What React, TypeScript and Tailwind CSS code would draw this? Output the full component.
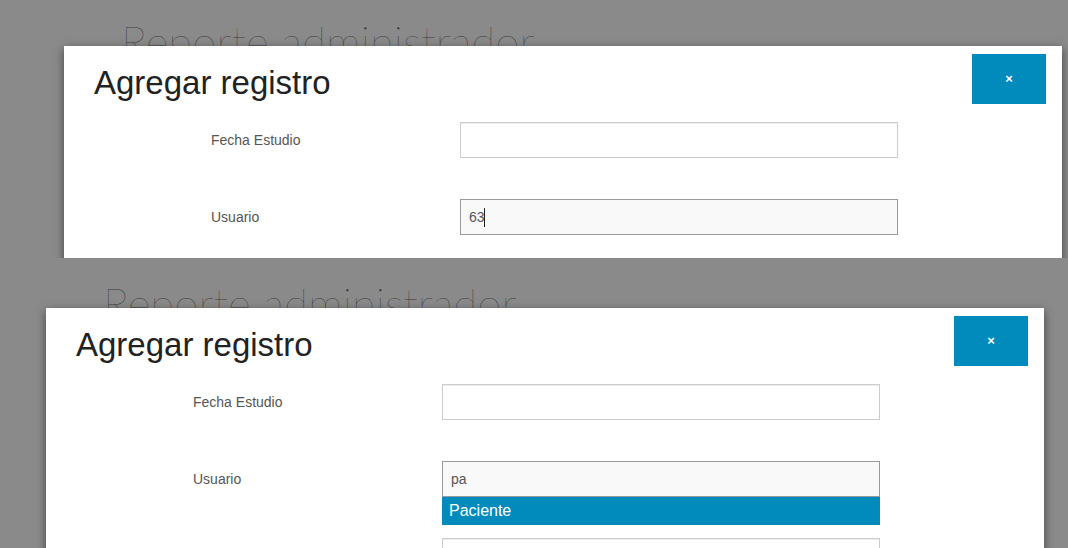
import { ReactNode } from 'react'

function Field({ label, value, focused, children }: { label: string; value?: string; focused?: boolean; children?: ReactNode }) {
  return (
    <div className="flex items-center">
      <label className="w-[396px] pl-[147px] pt-px text-[14px] text-[#555]">{label}</label>
      <div className="relative">
        <div
          className={
            focused
              ? 'w-[438px] h-9 border border-[#9a9a9a] bg-[#f9f9f9] px-2 flex items-center text-[14px] text-[#555]'
              : 'w-[438px] h-9 border border-[#cccccc] bg-white shadow-[inset_0_1px_1px_rgba(0,0,0,0.075)] px-2 flex items-center text-[14px] text-[#555]'
          }
        >
          {value}
        </div>
        {children}
      </div>
    </div>
  )
}

function Modal({ left, typed, caret, suggestion }: { left: number; typed: string; caret?: boolean; suggestion?: string }) {
  return (
    <div
      className="absolute top-[46px] w-[998px] bg-white shadow-[0_3px_9px_rgba(0,0,0,0.5)] pt-[18px] pb-[30px]"
      style={{ left }}
    >
      <button className="absolute top-2 right-4 w-[74px] h-[50px] bg-[#008bbc] text-white text-[13px] font-bold flex items-center justify-center">
        ×
      </button>
      <h2 className="pl-[30px] h-[38px] text-[33px] leading-[38px] text-[#222]">Agregar registro</h2>
      <div className="mt-[20px] flex flex-col gap-[41px]">
        <Field label="Fecha Estudio" />
        <Field label="Usuario" focused value={typed}>
          {caret && <span className="absolute left-[24px] top-[9px] w-px h-[19px] bg-[#222]" />}
          {suggestion && (
            <div className="absolute left-0 top-full w-[438px] h-[28px] bg-[#008bbc] text-white text-[16px] leading-[28px] px-[7px]">
              {suggestion}
            </div>
          )}
        </Field>
        {suggestion && <Field label="" />}
      </div>
    </div>
  )
}

function Shot({ height, titleLeft, modalLeft, typed, caret, suggestion }: { height: number; titleLeft: number; modalLeft: number; typed: string; caret?: boolean; suggestion?: string }) {
  return (
    <div className="relative overflow-hidden shrink-0" style={{ height }}>
      <h1
        className="pt-[15px] text-[44px] leading-[53px] font-thin text-[#3c3c3c] font-['Lato',sans-serif] whitespace-nowrap"
        style={{ paddingLeft: titleLeft }}
      >
        Reporte administrador
      </h1>
      <Modal left={modalLeft} typed={typed} caret={caret} suggestion={suggestion} />
    </div>
  )
}

export default function App() {
  return (
    <div className="w-[1068px] h-[548px] bg-[#8a8a8a] overflow-hidden flex flex-col font-['Liberation_Sans',Arial,sans-serif]">
      {/* first capture: cut off just under the Usuario field */}
      <Shot height={258} titleLeft={121} modalLeft={64} typed="63" caret />
      <div className="h-[4px] shrink-0" />
      <Shot height={286} titleLeft={103} modalLeft={46} typed="pa" suggestion="Paciente" />
    </div>
  )
}
